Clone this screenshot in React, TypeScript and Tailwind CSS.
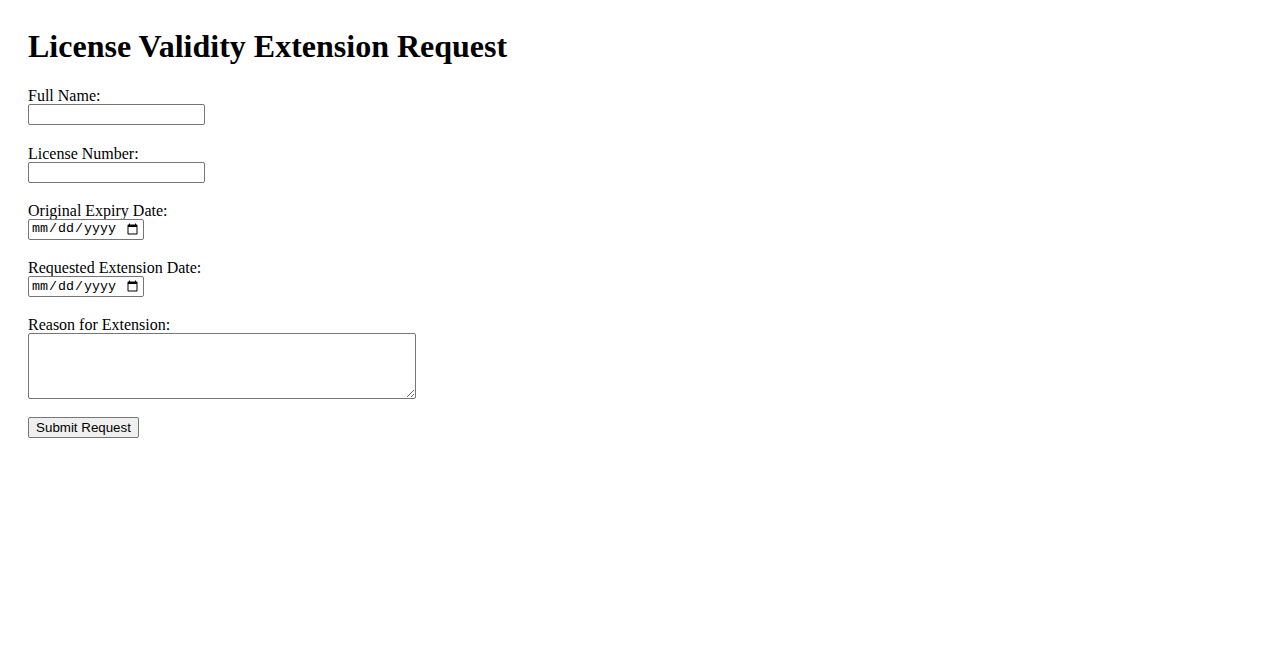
import React from "react";

const serif = { fontFamily: '"Liberation Serif", "Times New Roman", serif' };

function Field({ label, children }: { label: string; children: React.ReactNode }) {
  return (
    <div className="mb-[19.25px] flex flex-col items-start">
      <label className="block h-[17px] text-[16px] leading-[17px] text-black whitespace-nowrap">{label}</label>
      {children}
    </div>
  );
}

const textInput =
  "block w-[177px] h-[21px] border border-[#767676] rounded-[2px] bg-white px-[2px] py-[1px] text-[13.33px] outline-none";
const dateInput =
  "block w-[116px] h-[21px] border border-[#767676] rounded-[2px] bg-white px-[2px] py-[1px] text-[13.33px] text-black outline-none [font-family:'Liberation_Mono',monospace]";

export default function App() {
  return (
    <div className="min-h-[650px] w-full bg-white pt-[28px] pl-[28px]" style={serif}>
      <h1 className="mb-[22.6px] text-[32px] font-bold leading-[36.8px] text-black">
        License Validity Extension Request
      </h1>
      <form onSubmit={(e) => e.preventDefault()}>
        <Field label="Full Name:">
          <input type="text" className={textInput} />
        </Field>
        <Field label="License Number:">
          <input type="text" className={textInput} />
        </Field>
        <Field label="Original Expiry Date:">
          <input type="date" className={dateInput} />
        </Field>
        <Field label="Requested Extension Date:">
          <input type="date" className={dateInput} />
        </Field>
        <Field label="Reason for Extension:">
          <textarea className="block w-[388px] h-[66px] border border-[#767676] rounded-[2px] bg-white p-[2px] text-[13.33px] outline-none" />
        </Field>
        <button
          type="submit"
          className="-mt-[1.25px] block w-[111px] h-[21px] border border-[#767676] rounded-[2px] bg-[#efefef] px-[6px] py-[1px] text-[13.33px] leading-[17px] text-black"
          style={{ fontFamily: '"Liberation Sans", Arial, sans-serif' }}
        >
          Submit Request
        </button>
      </form>
    </div>
  );
}
